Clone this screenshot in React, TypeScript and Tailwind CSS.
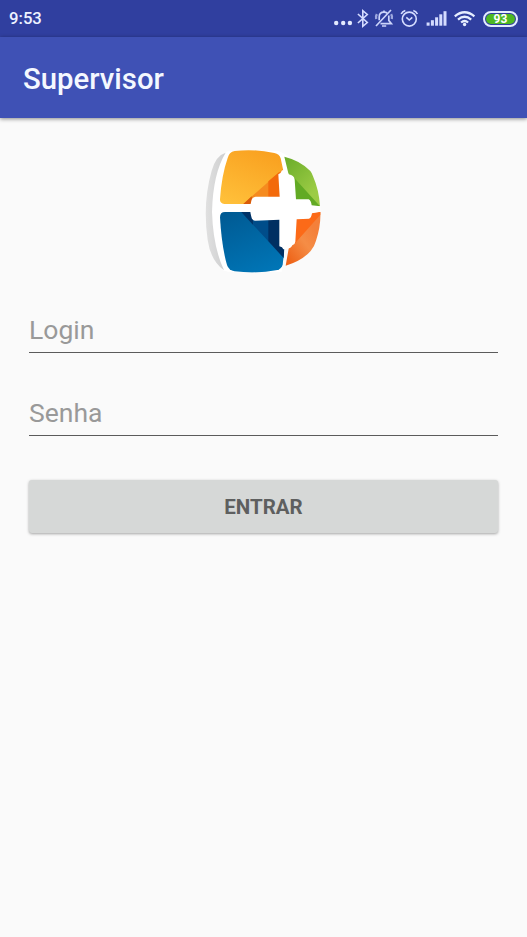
const DotsIcon = () => (
  <svg className="h-[37px] w-[20px]" viewBox="0 0 20 37" fill="#e3eaff">
    <circle cx="2.2" cy="23" r="2.2" />
    <circle cx="9.2" cy="23" r="2.2" />
    <circle cx="15.9" cy="23" r="2.2" />
  </svg>
);

const BluetoothIcon = () => (
  <svg className="ml-[3px] h-[37px] w-[14px]" viewBox="0.7 0 14 37" fill="none" stroke="#d5dcff" strokeWidth="1.6">
    <path d="M1.6 14 L11 22.5 L6.5 26.3 V10.7 L11 14.5 L1.6 23" />
  </svg>
);

const BellOffIcon = () => (
  <svg className="ml-[3px] h-[37px] w-[20px]" viewBox="0 0 20 37" fill="none" stroke="#ccd4fa" strokeWidth="1.7">
    <path d="M5.2 20.3 V17 C5.2 13.8 7 12.2 10 12.2 C11.4 12.2 12.5 12.6 13.3 13.2 M14.8 15.5 V20.5 L17.4 23.7 H6.5" />
    <path d="M10 12.2 V10.5 M8 26 H12.2 M2 26 L17 10" />
    <path d="M2.9 14.2 Q1.4 16.5 2.2 19 M17.1 14.2 Q18.6 16.5 17.8 19" strokeWidth="2.4" opacity=".7" />
  </svg>
);

const AlarmIcon = () => (
  <svg className="ml-[6px] h-[37px] w-[19px]" viewBox="0 0 19 37" fill="none" stroke="#d5dcff" strokeWidth="1.6">
    <circle cx="9.3" cy="19.1" r="7" />
    <path d="M1.2 14 Q2.3 11.3 5.3 10.4 M17.4 14 Q16.3 11.3 13.3 10.4 M6.3 17.3 L9.3 20 L12.3 17.3" />
  </svg>
);

const SignalIcon = () => (
  <svg className="ml-[7px] h-[37px] w-[22px]" viewBox="0 0 22 37" fill="#d5dcff">
    <rect x="0.6" y="22.5" width="3" height="3.2" />
    <rect x="4.9" y="20.2" width="3" height="5.5" />
    <rect x="9.1" y="17.3" width="3" height="8.4" />
    <rect x="13.3" y="14.3" width="3" height="11.4" />
    <rect x="17.5" y="11.2" width="3" height="14.5" />
  </svg>
);

const WifiIcon = () => (
  <svg className="ml-[6px] h-[37px] w-[22px]" viewBox="0 0 22 37" fill="none" stroke="#e6eeff" strokeWidth="2.3">
    <path d="M0.8 16.3 Q10.6 8.2 20.4 16.3" />
    <path d="M4 19.6 Q10.6 14 17.2 19.6" />
    <path d="M7.1 22.5 Q10.6 19.5 14.1 22.5" />
    <circle cx="10.6" cy="24.5" r="1.7" fill="#e6eeff" stroke="none" />
  </svg>
);

const Logo = () => (
  <svg className="h-[140px] w-[140px]" viewBox="0 0 420 420">
    <defs>
      <linearGradient id="yellow" x1="0.7" y1="0" x2="0.2" y2="1">
        <stop offset="0" stopColor="#f9a01f" />
        <stop offset="1" stopColor="#ffc03a" />
      </linearGradient>
      <linearGradient id="blue" x1="0.2" y1="0" x2="0.6" y2="1">
        <stop offset="0" stopColor="#005a93" />
        <stop offset="1" stopColor="#0075b6" />
      </linearGradient>
      <linearGradient id="green" x1="0.1" y1="0" x2="0.7" y2="0.8">
        <stop offset="0" stopColor="#6cad2a" />
        <stop offset="1" stopColor="#9ccc45" />
      </linearGradient>
      <linearGradient id="orange" x1="0.8" y1="0.3" x2="0.2" y2="1">
        <stop offset="0" stopColor="#f4803a" />
        <stop offset="0.4" stopColor="#f58d46" />
        <stop offset="1" stopColor="#ee6419" />
      </linearGradient>
      <linearGradient id="edge" x1="0" y1="0" x2="1" y2="0">
        <stop offset="0" stopColor="#e0e0e0" />
        <stop offset="1" stopColor="#cecfd0" />
      </linearGradient>
      <clipPath id="topLeft">
        <path d="M98 54 Q102 36 119 33 Q178 26 238 39 Q253 42 257 55 L265 92 V192 H88 Q74 190 75 178 Q80 105 98 54Z" />
      </clipPath>
      <clipPath id="bottomLeft">
        <path d="M75 232 Q75 216 90 216 H268 V330 L263 374 Q260 386 247 390 Q185 402 119 394 Q101 391 96 375 Q80 320 75 232Z" />
      </clipPath>
    </defs>
    <path d="M92 38 Q90 32 119 32 H250 L280 48 L260 395 H100 L84 391 Q50 330 44 210 Q46 100 92 38Z" fill="#fff" />
    <path d="M92 38 Q63 46 50 92 Q22 190 38 300 Q47 362 87 391 Q54 320 51 215 Q54 100 92 38Z" fill="url(#edge)" />
    <g clipPath="url(#topLeft)">
      <rect x="70" y="25" width="200" height="170" fill="url(#yellow)" />
      <path d="M265 86 L145 192 H270 V86Z" fill="#f58b1f" />
      <path d="M220 124 L252 97 H270 V192 H220Z" fill="#f36a0b" />
      <path d="M170 169 L145 192 H173Z" fill="#d95b09" />
    </g>
    <g clipPath="url(#bottomLeft)">
      <rect x="70" y="210" width="200" height="195" fill="url(#blue)" />
      <path d="M139 216 L268 356 V216Z" fill="#004d8a" />
      <path d="M220 230 V303 L268 356 V230Z" fill="#002f62" />
      <path d="M139 216 H174 V254Z" fill="#003367" />
    </g>
    <path d="M268 50 Q317 62 346 93 Q351 99 354 109 Q372 150 375 199 L346 200 L300 184 L280 100Z" fill="url(#green)" />
    <path d="M298 114 L375 199 H346 L342 184 L300 182Z" fill="#62aa24" />
    <path d="M300 234 L342 233 L349 219 L376 216 Q378 256 363 302 Q359 318 347 333 Q320 363 272 377 L282 320 L298 309Z" fill="url(#orange)" />
    <path d="M300 234 L342 233 L349 219 L376 216 V224 L298 312Z" fill="#fc6a18" />
    <path d="M250 103 Q258 100 261 91 Q275 88 281 103 Q297 106 299 119 L303 178 H341 Q348 181 350 196 L376 199 V215 L351 220 Q349 234 342 236 L305 238 L301 305 Q300 314 292 316 Q287 326 278 326 L265 328 Q263 321 253 319 V239 L181 242 Q171 241 169 230 Q162 207 169 182 Q171 171 182 170 H254Z" fill="#fff" />
  </svg>
);

const Field = ({ label, type = 'text' }: { label: string; type?: string }) => (
  <input
    type={type}
    placeholder={label}
    aria-label={label}
    className="block h-[46px] w-full border-b border-[#5b5b5b] bg-transparent text-[26.5px] text-[#444] outline-none placeholder:text-[#999]"
  />
);

export default function App() {
  return (
    <div className="flex min-h-[937px] w-full flex-col bg-[#fafafa] font-['Roboto',sans-serif]">
      <div className="flex h-[37px] items-center bg-[#303f9f] pr-[9px] pl-[9px]">
        <span className="mr-auto pt-px text-[16.7px] font-medium text-[#edf2ff]">9:53</span>
        <DotsIcon />
        <BluetoothIcon />
        <BellOffIcon />
        <AlarmIcon />
        <SignalIcon />
        <WifiIcon />
        <div className="ml-[7px] flex h-4 w-[35px] items-center rounded-full border-2 border-[#e3edff] p-px">
          <div className="flex h-full w-full items-center justify-center rounded-full bg-[#4db822] text-[12px] leading-none font-bold text-white">
            93
          </div>
        </div>
      </div>
      <header className="flex h-[81px] items-center bg-[#3f51b5] px-[23px] pt-[5px] shadow-[0_1px_4px_rgba(0,0,0,0.45)]">
        <h1 className="text-[29.3px] font-medium text-[#f4f8ff]">Supervisor</h1>
      </header>
      <main className="flex flex-col px-[29px] pt-[22px]">
        <div className="flex justify-center pl-[2px]">
          <Logo />
        </div>
        <form className="mt-[27px]">
          <Field label="Login" />
          <div className="mt-[37px]">
            <Field label="Senha" type="password" />
          </div>
          <button
            type="button"
            className="mt-11 flex h-[53px] w-full items-center justify-center rounded-[3px] bg-[#d6d8d7] pt-0.5 text-[20.5px] font-bold text-[#5e5f5f] shadow-[0_1px_3px_rgba(0,0,0,0.35)]"
          >
            ENTRAR
          </button>
        </form>
      </main>
    </div>
  );
}
